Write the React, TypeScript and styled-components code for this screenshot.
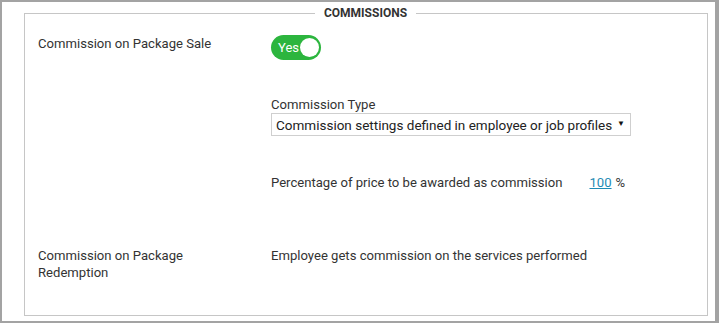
import { FC } from "react";
import styled, { createGlobalStyle } from "styled-components";

const GlobalStyle = createGlobalStyle`
  html, body {
    margin: 0;
    padding: 0;
    background: #fff;
  }
  body {
    font-family: Roboto, "Liberation Sans", Arial, sans-serif;
    font-size: 13.1px;
    color: #333;
  }
`

const Frame = styled.div`
  box-sizing: border-box;
  width: 719px;
  height: 323px;
  border-style: solid;
  border-color: #a3a3a3;
  border-width: 2px 4px 2px 2px;
  display: flex;
  flex-direction: column;
  padding: 3px 7px 5px 22px;
`

const Fieldset = styled.fieldset`
  flex: 1;
  margin: 0;
  border: 1px solid #c6c6c6;
  padding: 14px 14px 0 13px;
  min-width: 0;
`

const Legend = styled.legend`
  margin: 0 auto;
  padding: 0 9px;
  font-size: 12px;
  font-weight: 700;
  line-height: 16px;
  color: #333;
`

const Row = styled.div<{ $gap?: number }>`
  display: grid;
  grid-template-columns: 233px 1fr;
  margin-top: ${p => p.$gap ?? 0}px;
`

const Label = styled.div`
  line-height: 17px;
  padding-right: 38px;
`

const Column = styled.div`
  display: flex;
  flex-direction: column;
  align-items: flex-start;
`

const Toggle = styled.div`
  box-sizing: border-box;
  width: 50px;
  height: 25px;
  border-radius: 13px;
  background: #2cb53e;
  display: flex;
  align-items: center;
  justify-content: space-between;
  padding: 0 2px 0 7px;
  color: #fff;
  font-size: 13px;
`

const Knob = styled.span`
  width: 19px;
  height: 19px;
  border-radius: 50%;
  background: #fff;
`

const Field = styled.div<{ $gap: number }>`
  margin-top: ${p => p.$gap}px;
  display: flex;
  flex-direction: column;
`

const FieldLabel = styled.div`
  line-height: 17px;
`

const Select = styled.div`
  box-sizing: border-box;
  width: 360px;
  height: 23px;
  border: 1px solid #cfcfcf;
  display: flex;
  align-items: center;
  justify-content: space-between;
  padding: 0 5px 0 4px;
  color: #222;
  font-size: 13.5px;
`

const Arrow = styled.span`
  font-size: 8px;
  color: #111;
  padding-bottom: 3px;
`

const Percent = styled.div`
  margin-top: 38px;
  display: flex;
  line-height: 17px;
`

const PercentValue = styled.a`
  margin-left: 27px;
  color: #1f8bb4;
  text-decoration: underline;
  margin-right: 4px;
`

const App: FC = () => {
  return (
    <>
      <GlobalStyle />
      <Frame>
        <Fieldset>
          <Legend>COMMISSIONS</Legend>
          <Row>
            <Label>Commission on Package Sale</Label>
            <Column>
              <Toggle>
                Yes
                <Knob />
              </Toggle>
              <Field $gap={36}>
                <FieldLabel>Commission Type</FieldLabel>
                <Select>
                  Commission settings defined in employee or job profiles
                  <Arrow>▼</Arrow>
                </Select>
              </Field>
              <Percent>
                Percentage of price to be awarded as commission
                <PercentValue>100</PercentValue>%
              </Percent>
            </Column>
          </Row>
          <Row $gap={56}>
            <Label>Commission on Package Redemption</Label>
            <FieldLabel>Employee gets commission on the services performed</FieldLabel>
          </Row>
        </Fieldset>
      </Frame>
    </>
  )
}

export default App;
